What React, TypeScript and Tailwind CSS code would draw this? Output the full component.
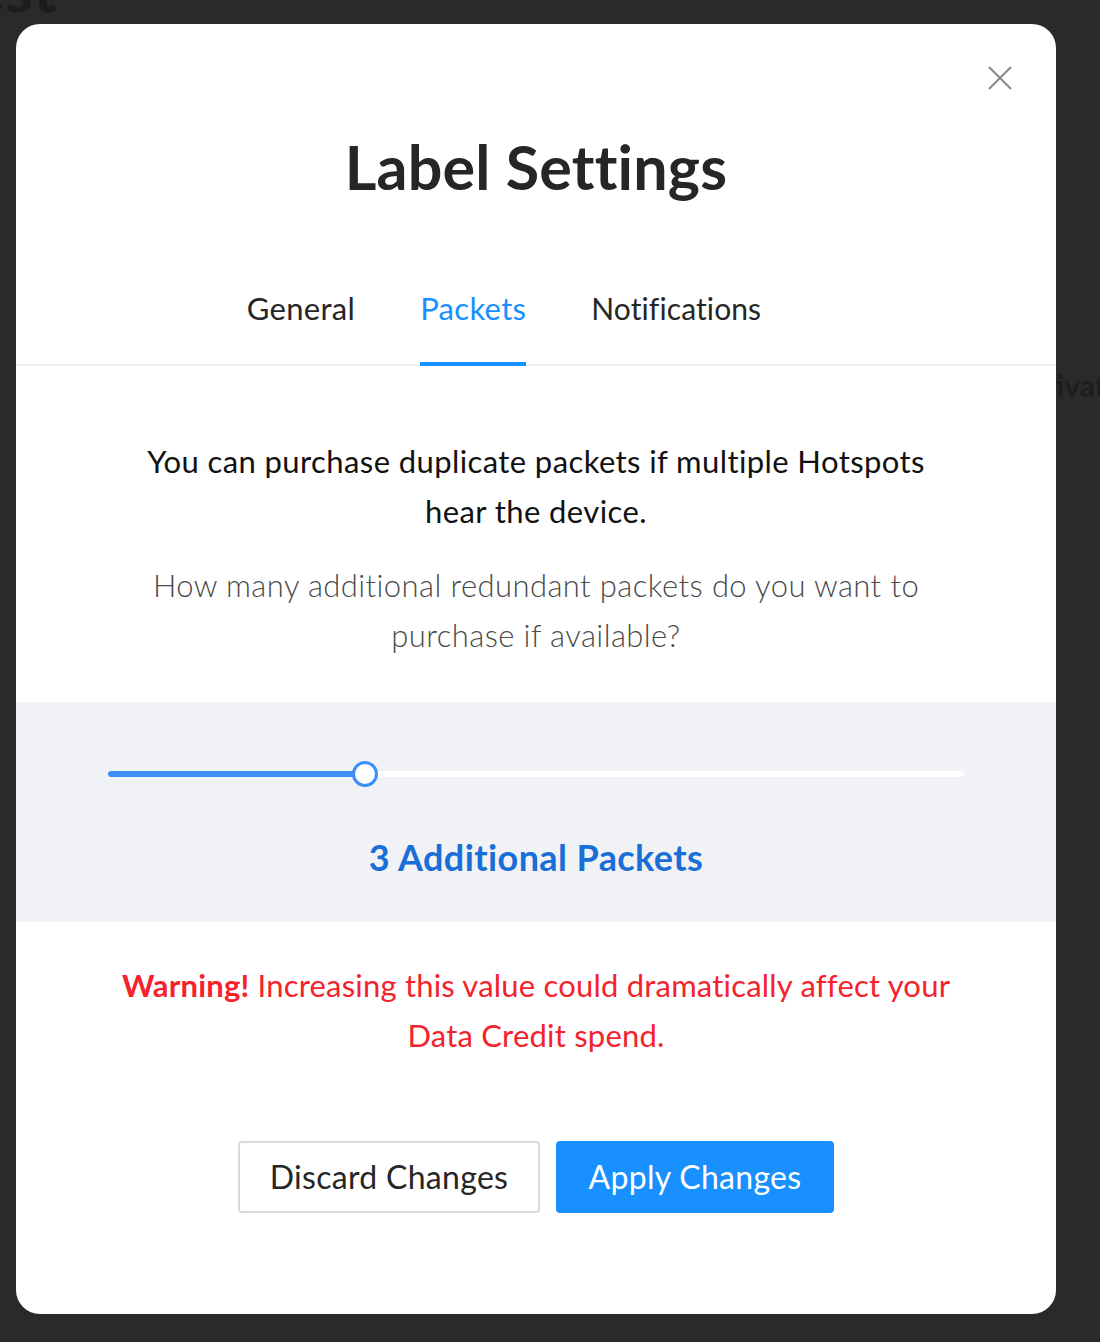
import React from "react";

export default function App() {
  const fill = 30;
  return (
    <div className="relative w-[1100px] h-[1342px] overflow-hidden bg-[#2a2a2a]" style={{ fontFamily: "Lato, 'Noto Sans', sans-serif" }}>
      {/* page behind the overlay */}
      <div className="flex flex-col">
        <div className="h-[192px] border-b border-[#2e2e2e] relative">
          <div className="mt-[-44px] ml-[-60px] text-[64px] font-bold text-[#1c1c1c] leading-none">Test</div>
        </div>
        <div className="h-[138px] border-b border-[#2e2e2e]"></div>
        <div className="h-[595px] border-b border-[#2e2e2e] flex justify-end pt-[40px]">
          <div className="text-[30px] font-bold text-[#1e1e1e] leading-none mr-[-6px]">Activat</div>
        </div>
      </div>

      {/* modal */}
      <div className="absolute left-[16px] top-[24px] w-[1040px] h-[1290px] bg-white rounded-[24px] flex flex-col">
        <button className="absolute right-[40px] top-[38px] w-[32px] h-[32px] flex items-center justify-center text-[#8c8c8c]">
          <svg width="26" height="26" viewBox="0 0 26 26" fill="none" stroke="currentColor" strokeWidth="2.2">
            <path d="M2 2L24 24M24 2L2 24" />
          </svg>
        </button>

        <h1 className="mt-[108px] text-center text-[61px] leading-[70px] font-bold text-[#262626] tracking-[0.2px]">Label Settings</h1>

        <div className="mt-[86px] border-b-2 border-[#f0f0f0] flex justify-center gap-[65px] pr-[64px]">
          <div className="text-[31px] leading-[40px] text-[#262626] pb-[36px] mb-[-2px] tracking-[0.3px]">General</div>
          <div className="text-[31px] leading-[40px] text-[#1890ff] pb-[34px] border-b-4 border-[#1890ff] mb-[-2px] tracking-[0.3px]">Packets</div>
          <div className="text-[30px] leading-[40px] text-[#262626] pb-[36px] mb-[-2px] tracking-[0.1px]">Notifications</div>
        </div>

        <div className="mt-[70px] px-[120px] text-center">
          <p className="text-[31px] leading-[50px] text-[#111] tracking-[0.4px]">You can purchase duplicate packets if multiple Hotspots hear the device.</p>
          <p className="mt-[24px] text-[31px] leading-[50px] text-[#4a4a4a] font-light tracking-[0.4px]">How many additional redundant packets do you want to purchase if available?</p>
        </div>

        <div className="mt-[42px] h-[220px] bg-[#f0f2f5] flex flex-col items-center">
          <div className="mt-[69px] relative w-[856px] h-[6px] rounded-full bg-white">
            <div className="absolute left-0 top-0 h-[6px] rounded-full bg-[#3d8ff5]" style={{ width: `${fill}%` }}></div>
            <div className="absolute top-[-10px] w-[26px] h-[26px] rounded-full bg-white border-[3px] border-[#3d8ff5] ml-[-13px]" style={{ left: `${fill}%` }}></div>
          </div>
          <div className="mt-[58px] text-[36px] leading-[44px] font-bold text-[#1a6ed8] tracking-[0.4px]">3 Additional Packets</div>
        </div>

        <p className="mt-[38px] px-[100px] text-center text-[31px] leading-[50px] text-[#f5222d] tracking-[0.2px]">
          <span className="font-bold">Warning!</span> Increasing this value could dramatically affect your Data Credit spend.
        </p>

        <div className="mt-[81px] flex justify-center gap-[16px]">
          <button className="w-[302px] h-[72px] border-2 border-[#d9d9d9] rounded-[4px] text-[32px] text-[#262626] bg-white tracking-[0.3px]">Discard Changes</button>
          <button className="w-[278px] h-[72px] rounded-[4px] text-[32px] text-white bg-[#1890ff] tracking-[0.3px]">Apply Changes</button>
        </div>
      </div>
    </div>
  );
}
